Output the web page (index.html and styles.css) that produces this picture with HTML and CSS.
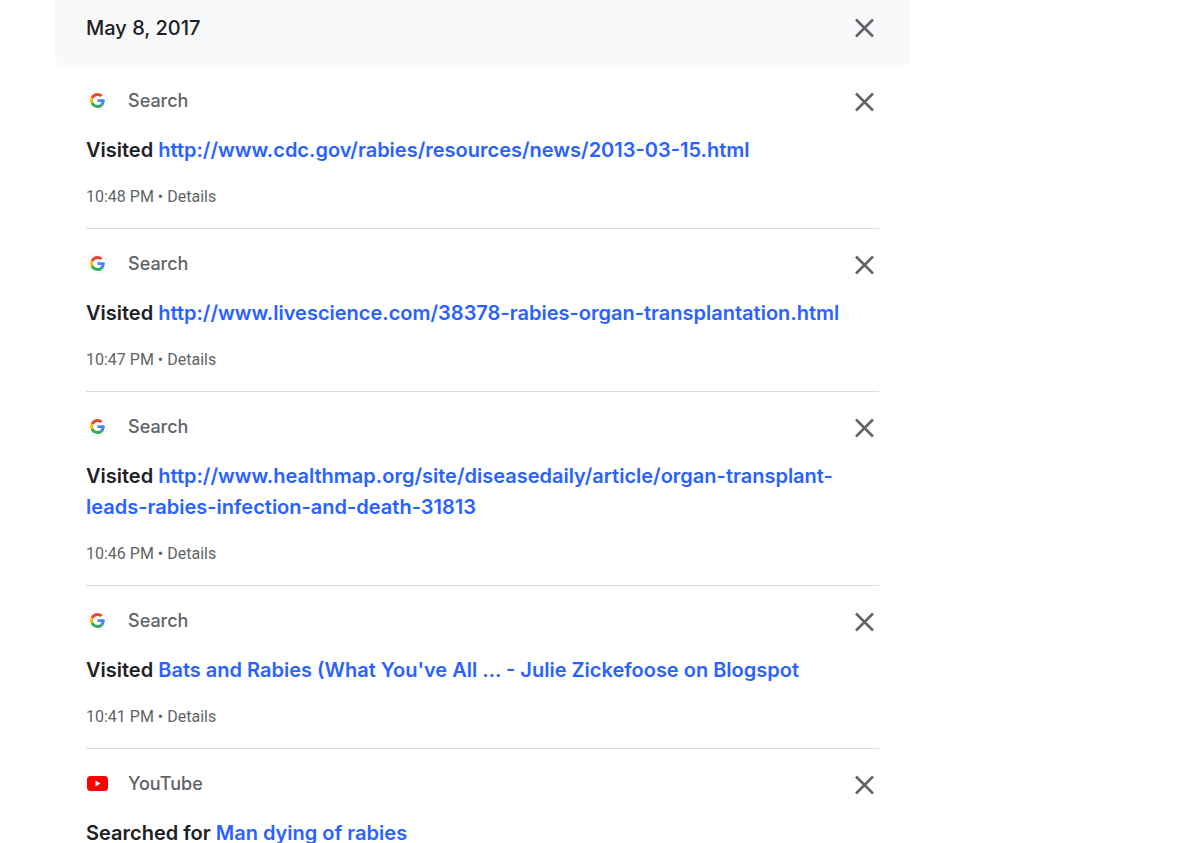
FILE: index.html
```html
<!DOCTYPE html>
<html lang="en">
<head>
<meta charset="utf-8">
<title>My Activity</title>
<link rel="stylesheet" href="styles.css">
</head>
<body>
<svg class="sprites" aria-hidden="true">
  <symbol id="close" viewBox="0 0 32 32"><path d="M8 7.5l17 17M25 7.5l-17 17" stroke="currentColor" stroke-width="2.5" fill="none"/></symbol>
  <symbol id="google" viewBox="0 0 24 24">
    <circle cx="11.5" cy="11.5" r="9.5" fill="#fff" stroke="#f1f1f1"/>
    <g transform="translate(4 4) scale(.3125)">
      <path fill="#EA4335" d="M24 9.5c3.54 0 6.71 1.22 9.21 3.6l6.85-6.85C35.9 2.38 30.47 0 24 0 14.62 0 6.51 5.38 2.56 13.22l7.98 6.19C12.43 13.72 17.74 9.5 24 9.5z"/>
      <path fill="#4285F4" d="M46.98 24.55c0-1.57-.15-3.09-.38-4.55H24v9.02h12.94c-.58 2.96-2.26 5.48-4.78 7.18l7.73 6c4.51-4.18 7.09-10.36 7.09-17.65z"/>
      <path fill="#FBBC05" d="M10.53 28.59c-.48-1.45-.76-2.99-.76-4.59s.27-3.14.76-4.59l-7.98-6.19C.92 16.46 0 20.12 0 24c0 3.88.92 7.54 2.56 10.78l7.97-6.19z"/>
      <path fill="#34A853" d="M24 48c6.48 0 11.93-2.13 15.89-5.81l-7.73-6c-2.15 1.45-4.92 2.3-8.16 2.3-6.26 0-11.57-4.22-13.47-9.91l-7.98 6.19C6.51 42.62 14.62 48 24 48z"/>
    </g>
  </symbol>
  <symbol id="youtube" viewBox="0 0 24 24"><rect x="1" y="4" width="21" height="15" rx="3.5" fill="#f00"/><path d="M9.5 8.5v6l5-3z" fill="#fff"/></symbol>
</svg>
<main class="activity">
  <header class="day">
    <h1 class="day-title">May 8, 2017</h1>
    <button class="close" aria-label="Delete all activity from May 8, 2017"><svg><use href="#close"/></svg></button>
  </header>
  <section class="items">
    <article class="item">
      <div class="source"><svg class="logo"><use href="#google"/></svg><span class="name">Search</span><button class="close" aria-label="Delete activity"><svg><use href="#close"/></svg></button></div>
      <h2 class="title">Visited <a href="#">http://www.cdc.gov/rabies/resources/news/2013-03-15.html</a></h2>
      <p class="meta">10:48 PM • <a href="#">Details</a></p>
    </article>
    <article class="item">
      <div class="source"><svg class="logo"><use href="#google"/></svg><span class="name">Search</span><button class="close" aria-label="Delete activity"><svg><use href="#close"/></svg></button></div>
      <h2 class="title">Visited <a href="#">http://www.livescience.com/38378-rabies-organ-transplantation.html</a></h2>
      <p class="meta">10:47 PM • <a href="#">Details</a></p>
    </article>
    <article class="item">
      <div class="source"><svg class="logo"><use href="#google"/></svg><span class="name">Search</span><button class="close" aria-label="Delete activity"><svg><use href="#close"/></svg></button></div>
      <h2 class="title">Visited <a href="#">http://www.healthmap.org/site/diseasedaily/article/organ-transplant-leads-rabies-infection-and-death-31813</a></h2>
      <p class="meta">10:46 PM • <a href="#">Details</a></p>
    </article>
    <article class="item">
      <div class="source"><svg class="logo"><use href="#google"/></svg><span class="name">Search</span><button class="close" aria-label="Delete activity"><svg><use href="#close"/></svg></button></div>
      <h2 class="title">Visited <a href="#">Bats and Rabies (What You've All ... - Julie Zickefoose on Blogspot</a></h2>
      <p class="meta">10:41 PM • <a href="#">Details</a></p>
    </article>
    <article class="item">
      <div class="source"><svg class="logo"><use href="#youtube"/></svg><span class="name">YouTube</span><button class="close" aria-label="Delete activity"><svg><use href="#close"/></svg></button></div>
      <h2 class="title">Searched for <a href="#">Man dying of rabies</a></h2>
    </article>
  </section>
</main>
</body>
</html>
```
FILE: styles.css
```css
* { box-sizing: border-box; }
body {
  margin: 0;
  height: 100vh;
  overflow: hidden;
  background: #fff;
  color: #202124;
  font-family: "Google Sans", Inter, sans-serif;
}
.sprites { position: absolute; width: 0; height: 0; }
.activity { max-width: 910px; padding-left: 55px; }
.day {
  display: flex;
  align-items: flex-start;
  justify-content: space-between;
  padding: 12px 30px 23px 31px;
  background: #f8f9fb;
  border-radius: 0 0 10px 10px;
}
.day-title { margin: 0; font-size: 20px; line-height: 32px; font-weight: 500; }
.close {
  width: 32px;
  height: 32px;
  padding: 0;
  border: 0;
  background: none;
  color: #5f6368;
  cursor: pointer;
}
.close svg { display: block; width: 32px; height: 32px; }
.items { padding: 0 31px; margin-top: -1px; }
.item { padding: 19px 0 20px; border-bottom: 1px solid #dadce0; }
.item:last-child { padding-bottom: 0; border-bottom: 0; }
.source { display: flex; align-items: center; height: 32px; }
.logo { width: 24px; height: 24px; margin-right: 18px; }
.name { color: #5f6368; font-size: 18px; line-height: 24px; font-weight: 500; }
.source .close { margin: 2px -1px 0 auto; }
.title {
  margin: 18px 0 20px;
  font-size: 20px;
  line-height: 31px;
  font-weight: 560;
  overflow-wrap: anywhere;
}
.item:last-child .title { margin-bottom: 0; }
.title a { color: #2962ff; text-decoration: none; }
.meta { margin: 0; color: #5f6368; font-family: Roboto, sans-serif; font-size: 16px; line-height: 22px; }
.meta a { color: inherit; text-decoration: none; }
```
